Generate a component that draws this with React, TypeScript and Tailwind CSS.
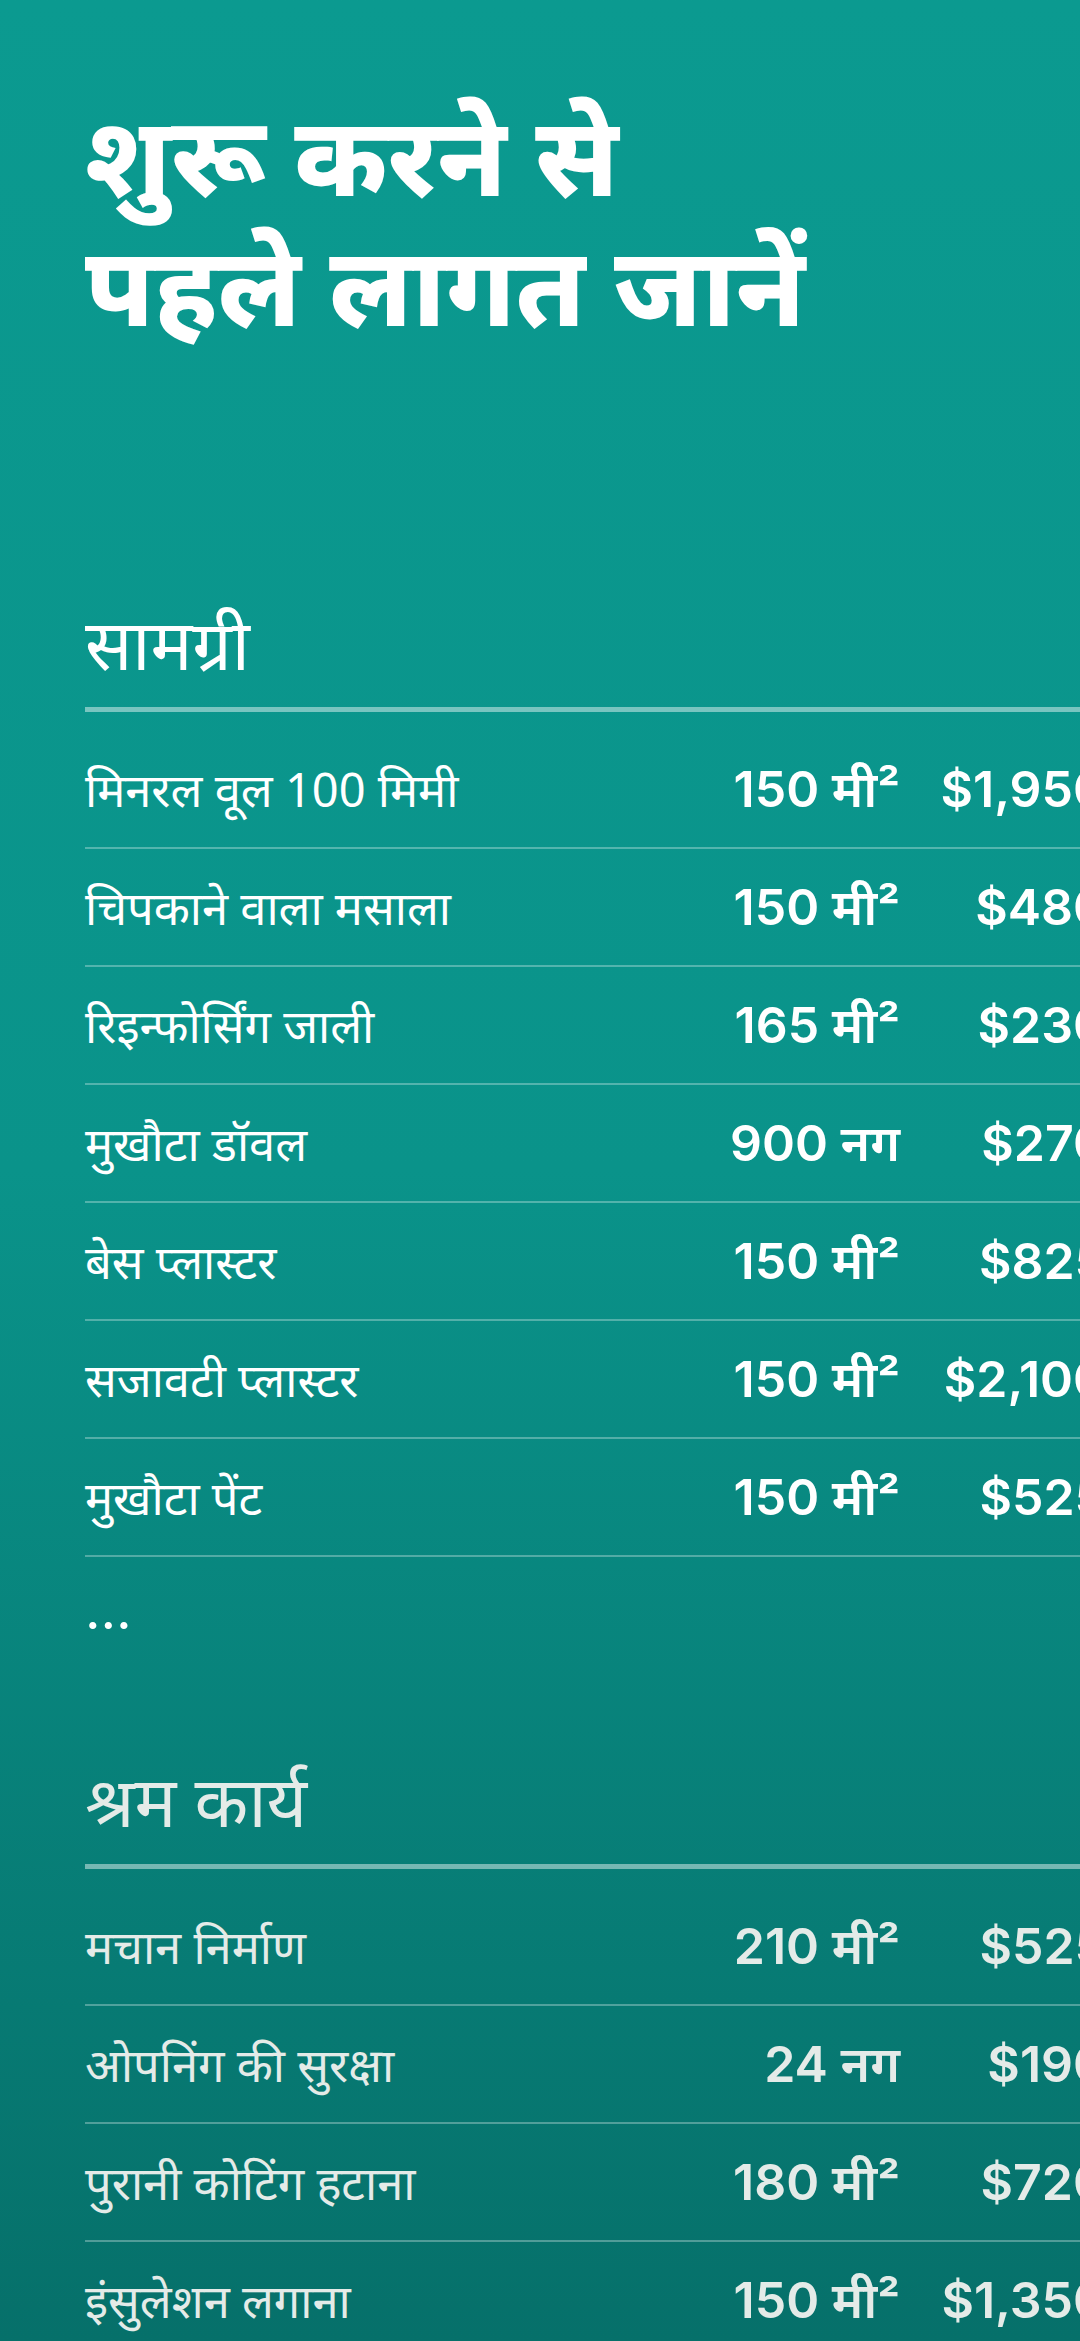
import React from "react";

type Row = { name: string; qty: string; price: string };

const materials: Row[] = [
  { name: "मिनरल वूल 100 मिमी", qty: "150 मी²", price: "$1,950" },
  { name: "चिपकाने वाला मसाला", qty: "150 मी²", price: "$480" },
  { name: "रिइन्फोर्सिंग जाली", qty: "165 मी²", price: "$230" },
  { name: "मुखौटा डॉवल", qty: "900 नग", price: "$270" },
  { name: "बेस प्लास्टर", qty: "150 मी²", price: "$825" },
  { name: "सजावटी प्लास्टर", qty: "150 मी²", price: "$2,100" },
  { name: "मुखौटा पेंट", qty: "150 मी²", price: "$525" },
];

const labor: Row[] = [
  { name: "मचान निर्माण", qty: "210 मी²", price: "$525" },
  { name: "ओपनिंग की सुरक्षा", qty: "24 नग", price: "$190" },
  { name: "पुरानी कोटिंग हटाना", qty: "180 मी²", price: "$720" },
  { name: "इंसुलेशन लगाना", qty: "150 मी²", price: "$1,350" },
];

const deva = { fontFamily: '"Noto Sans", "Noto Sans Devanagari", sans-serif' };
const num = { fontFamily: 'Inter, "Noto Sans", "Noto Sans Devanagari", sans-serif' };

function TableRow({ r }: { r: Row }) {
  return (
    <div className="flex items-center h-[118px] border-b-2 border-white/30">
      <div className="flex-1 text-[47px] leading-none whitespace-nowrap" style={deva}>
        {r.name}
      </div>
      <div className="w-[300px] text-right text-[50px] font-semibold leading-none whitespace-nowrap" style={num}>
        {r.qty}
      </div>
      <div className="w-[206px] text-right text-[50px] font-semibold leading-none whitespace-nowrap" style={num}>
        {r.price}
      </div>
    </div>
  );
}

function Section({ title, rows, more }: { title: string; rows: Row[]; more?: boolean }) {
  return (
    <section>
      <h2 className="text-[70px] leading-[84px] font-normal" style={deva}>
        {title}
      </h2>
      <div className="mt-[22px] h-[5px] bg-white/45" />
      <div className="mt-[19px] flex flex-col">
        {rows.map((r) => (
          <TableRow key={r.name} r={r} />
        ))}
      </div>
      {more && (
        <div className="mt-[26px] text-[54px] leading-none tracking-[2px]" style={num}>
          …
        </div>
      )}
    </section>
  );
}

export default function App() {
  return (
    <div className="w-[1080px] h-[2341px] overflow-hidden bg-gradient-to-b from-[#0b9a90] via-[#0a938a] to-[#06706a] text-white">
      <div className="ml-[85px] w-[1021px]">
        <h1
          className="pt-[88px] text-[110px] leading-[130px] font-extrabold"
          style={deva}
        >
          शुरू करने से
          <br />
          पहले लागत जानें
        </h1>
        <div className="mt-[253px]">
          <Section title="सामग्री" rows={materials} more />
        </div>
        <div className="mt-[121px] text-[#e4ebe8]">
          <Section title="श्रम कार्य" rows={labor} />
        </div>
      </div>
    </div>
  );
}
